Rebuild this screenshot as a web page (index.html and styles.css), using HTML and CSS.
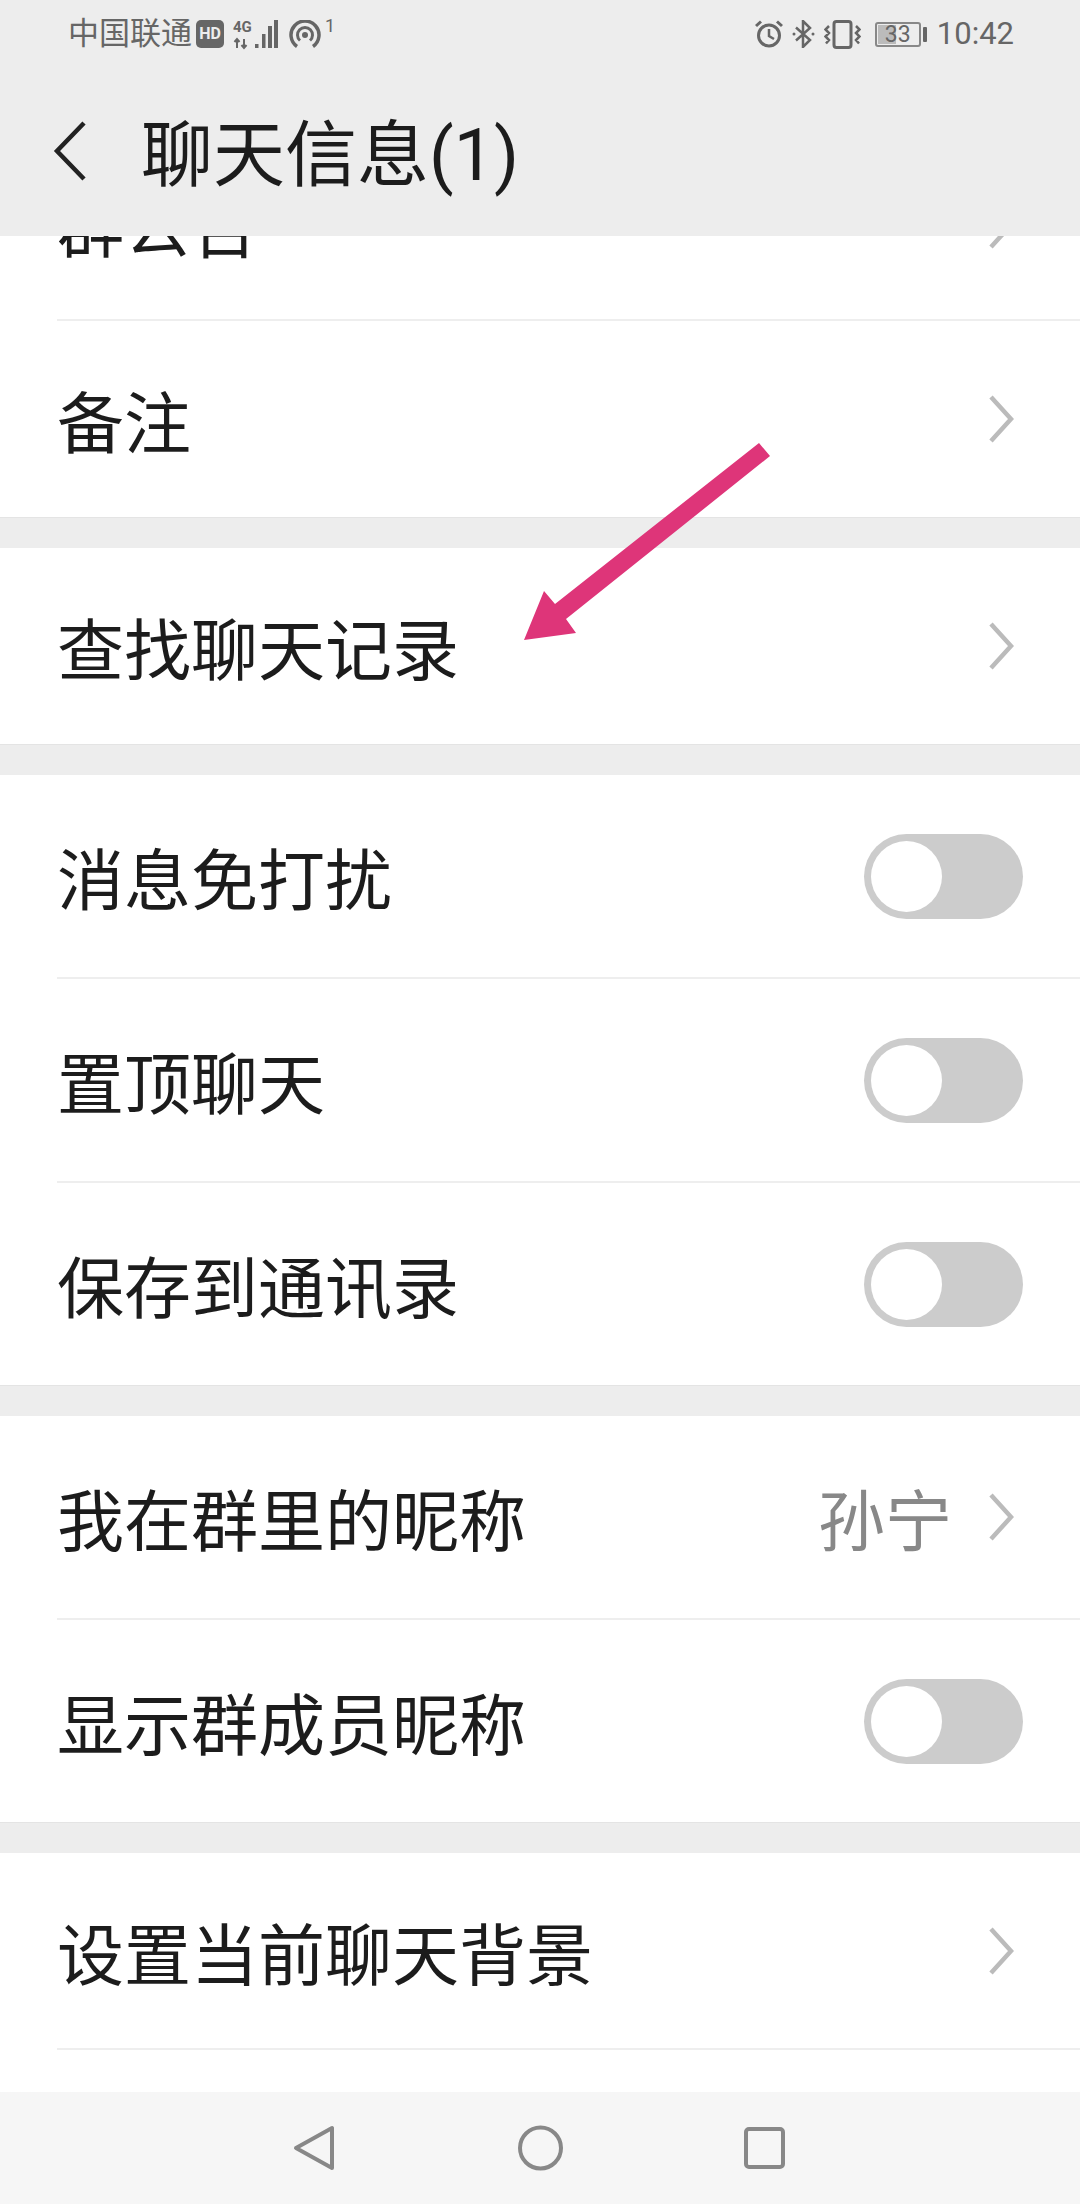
FILE: index.html
```html
<!DOCTYPE html>
<html lang="zh-CN">
<head>
    <meta charset="UTF-8">
    <meta name="viewport" content="width=device-width, initial-scale=1.0">
    <title>聊天信息(1)</title>
    <link rel="stylesheet" href="styles.css">
</head>
<body>
    <div class="screen">
        <header class="header">
            <div class="status-bar">
                <div class="status-left">
                    <span class="carrier">中国联通</span>
                    <span class="hd-badge">HD</span>
                    <svg class="icon-signal" width="46" height="29" viewBox="0 0 46 29">
                        <text x="0" y="12" class="signal-text">4G</text>
                        <path d="M4 28V19M1.500 22L4 19L6.500 22M11 19V28M8.500 25L11 28L13.500 25" fill="none" stroke="#666" stroke-width="2"/>
                        <rect x="22" y="24" width="3.500" height="4" fill="#666"/>
                        <rect x="29" y="14" width="3.500" height="14" fill="#666"/>
                        <rect x="35" y="6" width="4" height="22" fill="#666"/>
                        <rect x="41" y="0" width="4" height="28" fill="#666"/>
                    </svg>
                    <svg class="icon-hotspot" width="32" height="28" viewBox="0 0 32 28">
                        <path d="M8 26.500A14 14 0 1 1 24 26.500" fill="none" stroke="#666" stroke-width="3.500"/>
                        <path d="M11 20.500A7.500 7.500 0 1 1 21 20.500" fill="none" stroke="#666" stroke-width="3"/>
                        <circle cx="16" cy="15" r="3" fill="#666"/>
                    </svg>
                    <span class="hotspot-count">1</span>
                </div>
                <div class="status-right">
                    <svg width="28" height="28" viewBox="0 0 28 28">
                        <circle cx="14" cy="15.500" r="10.500" fill="none" stroke="#666" stroke-width="3"/>
                        <path d="M14 9V16L19 19" fill="none" stroke="#666" stroke-width="2.500"/>
                        <path d="M1 6L6 1.500M27 6L22 1.500" fill="none" stroke="#666" stroke-width="3"/>
                    </svg>
                    <svg class="icon-bt" width="23" height="28" viewBox="0 0 23 28">
                        <path d="M4 7.500L18 20L11 27V1L18 8L4 20.500" fill="none" stroke="#666" stroke-width="2.500"/>
                        <circle cx="2" cy="14" r="1.500" fill="#666"/>
                        <circle cx="21" cy="14" r="1.500" fill="#666"/>
                    </svg>
                    <svg class="icon-vibrate" width="37" height="29" viewBox="0 0 37 29">
                        <rect x="10" y="1.500" width="17" height="26" rx="2.500" fill="none" stroke="#666" stroke-width="3"/>
                        <path d="M5 6L1.500 9.500L5 13L1.500 16.500L5 20L2 23.500M32 6L35.500 9.500L32 13L35.500 16.500L32 20L35 23.500" fill="none" stroke="#666" stroke-width="2.500"/>
                    </svg>
                    <div class="battery">
                        <div class="battery-body">
                            <div class="battery-fill"></div>
                            <span class="battery-text">33</span>
                        </div>
                        <div class="battery-nub"></div>
                    </div>
                    <span class="time">10:42</span>
                </div>
            </div>
            <div class="title-bar">
                <svg class="back" width="36" height="62" viewBox="0 0 36 62">
                    <path d="M32 3L5 31L32 59" fill="none" stroke="#222" stroke-width="4.500"/>
                </svg>
                <h1 class="title">聊天信息(1)</h1>
            </div>
        </header>

        <main class="content">
            <section class="section">
                <div class="row row-clipped">
                    <span class="label">群公告</span>
                    <svg class="chevron" width="26" height="48" viewBox="0 0 26 48"><path d="M3 2L23 24L3 46" fill="none" stroke="#bbb" stroke-width="4.500"/></svg>
                </div>
                <div class="row row-short">
                    <span class="label">备注</span>
                    <svg class="chevron" width="26" height="48" viewBox="0 0 26 48"><path d="M3 2L23 24L3 46" fill="none" stroke="#bbb" stroke-width="4.500"/></svg>
                </div>
            </section>
            <section class="section">
                <div class="row row-short">
                    <span class="label">查找聊天记录</span>
                    <svg class="chevron" width="26" height="48" viewBox="0 0 26 48"><path d="M3 2L23 24L3 46" fill="none" stroke="#bbb" stroke-width="4.500"/></svg>
                </div>
            </section>
            <section class="section">
                <div class="row">
                    <span class="label">消息免打扰</span>
                    <div class="toggle"><div class="knob"></div></div>
                </div>
                <div class="row">
                    <span class="label">置顶聊天</span>
                    <div class="toggle"><div class="knob"></div></div>
                </div>
                <div class="row">
                    <span class="label">保存到通讯录</span>
                    <div class="toggle"><div class="knob"></div></div>
                </div>
            </section>
            <section class="section">
                <div class="row">
                    <span class="label">我在群里的昵称</span>
                    <span class="value">孙宁</span>
                    <svg class="chevron chevron-near" width="26" height="48" viewBox="0 0 26 48"><path d="M3 2L23 24L3 46" fill="none" stroke="#bbb" stroke-width="4.500"/></svg>
                </div>
                <div class="row">
                    <span class="label">显示群成员昵称</span>
                    <div class="toggle"><div class="knob"></div></div>
                </div>
            </section>
            <section class="section section-last">
                <div class="row row-short row-line">
                    <span class="label">设置当前聊天背景</span>
                    <svg class="chevron" width="26" height="48" viewBox="0 0 26 48"><path d="M3 2L23 24L3 46" fill="none" stroke="#bbb" stroke-width="4.500"/></svg>
                </div>
            </section>
        </main>

        <nav class="nav-bar">
            <svg width="45" height="48" viewBox="0 0 45 48"><path d="M39 4V44L3 24Z" fill="none" stroke="#888" stroke-width="4" stroke-linejoin="round"/></svg>
            <svg width="45" height="48" viewBox="0 0 45 48"><circle cx="22.500" cy="24" r="20.500" fill="none" stroke="#888" stroke-width="4"/></svg>
            <svg width="45" height="48" viewBox="0 0 45 48"><rect x="3" y="5" width="37" height="38" rx="3" fill="none" stroke="#888" stroke-width="4"/></svg>
        </nav>

        <svg class="arrow" width="260" height="210" viewBox="0 0 260 210">
            <path d="M238 3L249 16L45 179L55 193L3 200L23 151L34 164Z" fill="#de3579"/>
        </svg>
    </div>
</body>
</html>
```

FILE: styles.css
```css
* {
    box-sizing: border-box;
}
body {
    margin: 0;
    font-family: Roboto, "Noto Sans CJK SC", sans-serif;
    background: #ededed;
    color: #1c1c1c;
}
.screen {
    position: relative;
    width: 1080px;
    height: 2204px;
    display: flex;
    flex-direction: column;
    overflow: hidden;
}

/* header */
.header {
    height: 236px;
    flex: none;
    background: #ededed;
}
.status-bar {
    height: 66px;
    padding: 2px 66px 0 68px;
    display: flex;
    justify-content: space-between;
    align-items: center;
    color: #666;
}
.status-left,
.status-right {
    display: flex;
    align-items: center;
}
.carrier {
    font-size: 31px;
    line-height: 36px;
}
.hd-badge {
    width: 28px;
    height: 28px;
    margin-left: 4px;
    border-radius: 5px;
    background: #666;
    color: #ededed;
    font-size: 16px;
    font-weight: 700;
    line-height: 28px;
    text-align: center;
}
.icon-signal {
    margin-left: 9px;
    overflow: visible;
}
.signal-text {
    font-size: 15px;
    font-weight: 700;
    fill: #666;
}
.icon-hotspot {
    margin-left: 10px;
}
.hotspot-count {
    align-self: flex-start;
    margin-left: 4px;
    font-size: 18px;
    line-height: 20px;
}
.status-right {
    gap: 9px;
}
.battery {
    display: flex;
    align-items: center;
    gap: 2px;
    margin-left: 5px;
}
.battery-body {
    position: relative;
    width: 46px;
    height: 25px;
    border: 2px solid #888;
    border-radius: 3px;
    display: flex;
    align-items: center;
    justify-content: center;
}
.battery-fill {
    position: absolute;
    left: 1px;
    top: 1px;
    bottom: 1px;
    width: 18px;
    background: #bbb;
}
.battery-text {
    position: relative;
    font-size: 23px;
    line-height: 21px;
}
.battery-nub {
    width: 4px;
    height: 15px;
    background: #666;
    border-radius: 1px;
}
.time {
    margin-left: 1px;
    font-size: 31px;
    line-height: 36px;
}
.title-bar {
    height: 170px;
    padding-left: 52px;
    display: flex;
    align-items: center;
}
.title {
    margin: 10px 0 0 53px;
    font-size: 72px;
    font-weight: 400;
    line-height: 80px;
    color: #1c1c1c;
}

/* list */
.content {
    flex: 1;
    min-height: 0;
    display: flex;
    flex-direction: column;
    gap: 30px;
    overflow: hidden;
}
.section {
    flex: none;
    background: #fff;
    border-bottom: 1px solid #e4e4e4;
}
.section-last {
    flex: 1;
    border-bottom: 0;
}
.row {
    height: 204px;
    margin-left: 57px;
    padding-right: 57px;
    display: flex;
    align-items: center;
    border-bottom: 2px solid #eee;
}
.row:last-child {
    height: 202px;
    border-bottom: 0;
}
.row.row-short {
    height: 196px;
}
.row.row-line {
    height: 197px;
    border-bottom: 2px solid #eee;
}
.row.row-clipped {
    height: 85px;
    align-items: flex-end;
    overflow: hidden;
}
.row-clipped .label {
    margin-bottom: 45px;
}
.row-clipped .chevron {
    margin-bottom: 70px;
}
.label {
    flex: 1;
    padding-top: 12px;
    font-size: 67px;
    line-height: 90px;
    color: #1c1c1c;
}
.value {
    padding-top: 12px;
    font-size: 67px;
    line-height: 90px;
    color: #888;
}
.chevron {
    flex: none;
    margin: 0 9px 0 40px;
}
.chevron-near {
    margin-left: 36px;
}
.toggle {
    flex: none;
    width: 159px;
    height: 85px;
    padding: 7px;
    border-radius: 43px;
    background: #ccc;
}
.knob {
    width: 71px;
    height: 71px;
    border-radius: 50%;
    background: #fff;
}

/* bottom nav */
.nav-bar {
    height: 112px;
    flex: none;
    background: #f6f6f6;
    display: flex;
    justify-content: center;
    align-items: center;
    gap: 180px;
}

/* pink annotation drawn on top of the screenshot */
.arrow {
    position: absolute;
    left: 521px;
    top: 440px;
}
```
